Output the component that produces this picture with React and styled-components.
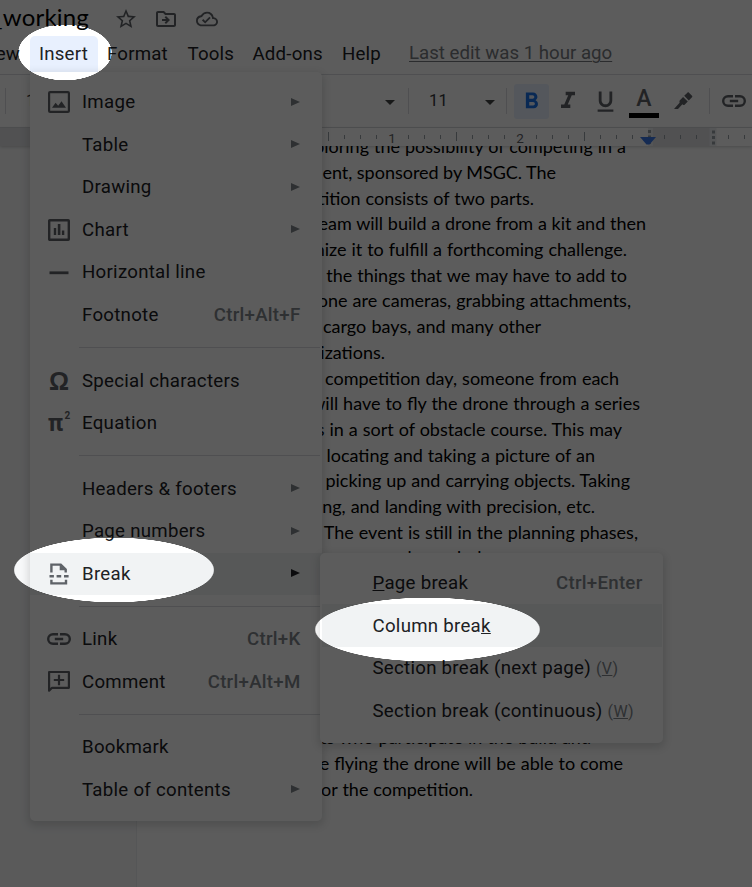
import React from 'react';
import styled, { createGlobalStyle } from 'styled-components';
import {
  MdStarBorder,
  MdOutlineDriveFileMove,
  MdOutlineCloudDone,
  MdFormatBold,
  MdFormatItalic,
  MdFormatUnderlined,
} from 'react-icons/md';

const GlobalStyle = createGlobalStyle`
  * { box-sizing: border-box; }
  body { margin: 0; overflow: hidden; background: #fff; }
`;

const Screen = styled.div`
  position: relative;
  width: 752px;
  height: 887px;
  overflow: hidden;
  display: flex;
  flex-direction: column;
  background: #fff;
  color: #202124;
  font-family: Roboto, sans-serif;
  font-size: 18.67px;
`;

const TitleRow = styled.div`
  height: 36px;
  flex: none;
  display: flex;
  align-items: center;
  color: #5f6368;
`;

const DocTitle = styled.div`
  width: 89px;
  height: 36px;
  display: flex;
  justify-content: flex-end;
  color: #000;
  font: 24px/34px Lato, sans-serif;
  letter-spacing: 0.2px;
  white-space: nowrap;
`;

const TitleIcon = styled.div`
  display: flex;
  margin-left: ${(p) => p.$gap}px;
  margin-top: 1px;
`;

const MenuBar = styled.nav`
  height: 38px;
  flex: none;
  display: flex;
  align-items: flex-start;
`;

const MenuBarItem = styled.div`
  flex: none;
  display: flex;
  justify-content: ${(p) => (p.$end ? 'flex-end' : 'flex-start')};
  width: ${(p) => p.$width}px;
  height: 36px;
  padding-left: 9px;
  line-height: 37px;
  letter-spacing: 0.2px;
  white-space: nowrap;
  border-radius: 5px 5px 0 0;
  background: ${(p) => (p.$active ? '#e8f0fe' : 'transparent')};
`;

const LastEdit = styled.div`
  margin-left: 18px;
  line-height: 35px;
  color: #777b80;
  text-decoration: underline;
  text-underline-offset: 2px;
  text-decoration-thickness: 1px;
  white-space: nowrap;
`;

const Toolbar = styled.div`
  height: 54px;
  flex: none;
  display: flex;
  align-items: center;
  border-top: 1px solid #dadce0;
  border-bottom: 1px solid #dadce0;
  color: #444746;
`;

const Divider = styled.div`
  flex: none;
  width: 1px;
  height: 26px;
  margin-left: ${(p) => p.$gap}px;
  background: #dadce0;
`;

const ToolText = styled.div`
  flex: none;
  width: ${(p) => p.$width}px;
  margin-left: ${(p) => p.$gap}px;
  font-size: 16.5px;
  line-height: 24px;
  letter-spacing: 0.2px;
  color: #333639;
  overflow: hidden;
  white-space: nowrap;
`;

const Caret = styled.div`
  flex: none;
  margin-top: 2px;
  margin-left: ${(p) => p.$gap}px;
  border: 5.5px solid transparent;
  border-top-color: #444746;
  border-bottom: 0;
`;

const ToolButton = styled.div`
  width: 35px;
  height: 35px;
  margin-left: ${(p) => p.$gap}px;
  flex: none;
  display: flex;
  align-items: center;
  justify-content: center;
  border-radius: 3px;
  color: ${(p) => (p.$active ? '#1a73e8' : '#5f6368')};
  background: ${(p) => (p.$active ? '#e8f0fe' : 'transparent')};
`;

const TextColor = styled.div`
  flex: none;
  width: 30px;
  height: 33px;
  margin-left: ${(p) => p.$gap}px;
  border-bottom: 5px solid #000;
  color: #5f6368;
  font: 500 23px/28px Roboto, sans-serif;
  text-align: center;
`;

const Ruler = styled.div`
  height: 18px;
  flex: none;
  display: flex;
  z-index: 1;
  background: #fff;
  box-shadow: 0 1px 3px rgba(60, 64, 67, 0.25);
  color: #5f6368;
`;

const RulerMargin = styled.div`
  width: ${(p) => p.$width}px;
  background: #dfe0e4;
`;

const RulerSvg = styled.svg`
  display: block;
  flex: none;
`;

const Workspace = styled.main`
  flex: 1;
  display: flex;
  background: #f8f9fa;
  overflow: hidden;
`;

const Gutter = styled.div`
  width: 137px;
  flex: none;
  border-right: 1px solid #eceef0;
`;

const Paper = styled.article`
  flex: 1;
  background: #fff;
  color: #000;
  font: 18px/25.7px Lato, sans-serif;
  margin-top: -11.7px;
`;

const Line = styled.p`
  margin: 0;
  height: 25.7px;
  width: ${(p) => p.$end - 137}px;
  display: flex;
  justify-content: flex-end;
  word-spacing: ${(p) => p.$spacing ?? 0.35}px;
  white-space: pre;
`;

const IndentMarker = styled.svg`
  position: absolute;
  left: 640px;
  top: 137px;
  z-index: 2;
`;

const Popup = styled.div`
  position: absolute;
  left: ${(p) => p.$left}px;
  top: ${(p) => p.$top}px;
  width: ${(p) => p.$width}px;
  height: ${(p) => p.$height}px;
  padding-top: 8.8px;
  z-index: 2;
  background: #fff;
  border-radius: ${(p) => p.$radius};
  box-shadow: 0 3px 8px 2px rgba(60, 64, 67, 0.18);
`;

const MenuRow = styled.div`
  height: 42.6px;
  display: flex;
  align-items: center;
  padding-right: 22px;
  background: ${(p) => (p.$active ? '#f1f3f4' : 'transparent')};
`;

const SubRow = styled(MenuRow)`
  height: 42.67px;
  margin: 0 1px 0 2px;
  padding: 0 20px 0 50.5px;
`;

const IconSlot = styled.div`
  width: 52px;
  height: 30px;
  padding-left: 6px;
  flex: none;
  display: flex;
  align-items: center;
  justify-content: center;
  color: #5f6368;
`;

const OmegaGlyph = styled.span`
  font: bold 25px/28px 'Liberation Sans', sans-serif;
`;

const PiGlyph = styled.span`
  display: flex;
  align-items: flex-start;
  font: bold 24px/33px Roboto, sans-serif;
`;

const Exponent = styled.span`
  font-size: 10px;
  line-height: 17px;
  margin-left: 1px;
`;

const Label = styled.div`
  flex: 1;
  letter-spacing: 0.27px;
  line-height: 24px;
  white-space: pre;
`;

const Access = styled.span`
  font-size: 16px;
  color: #80868b;
`;

const Shortcut = styled.div`
  color: #80868b;
  font-weight: 500;
  letter-spacing: 0.27px;
  margin-right: -0.5px;
`;

const Arrow = styled.div`
  margin-right: 0.5px;
  margin-top: -1px;
  border: 4.6px solid transparent;
  border-left: 9.6px solid ${(p) => (p.$active ? '#202124' : '#80868b')};
  border-right: 0;
`;

const Separator = styled.div`
  height: 22.9px;
  padding: 10.9px 2px 0 49px;
  &::before {
    content: '';
    display: block;
    height: 1px;
    background: #dadce0;
  }
`;

const spot = (rx, ry, x, y) =>
  `radial-gradient(${rx}px ${ry}px at ${x}px ${y}px, transparent 98.8%, #000 100%)`;

const Dimmer = styled.div`
  position: absolute;
  inset: 0;
  z-index: 5;
  background: rgba(0, 0, 0, 0.64);
  mask-image: ${spot(47, 28, 65, 52.5)}, ${spot(100.5, 32.5, 114, 570)}, ${spot(113, 32, 427.5, 629.5)};
  mask-composite: intersect;
`;

const ImageIcon = () => (
  <svg width="24" height="24" viewBox="0 0 24 24">
    <rect x="2.1" y="2.1" width="19.8" height="19.8" rx="1" fill="none" stroke="currentColor" strokeWidth="2.2" />
    <path d="M5 17.8l3.6-5 2.6 3 3.3-4.5 4.5 6.5z" fill="currentColor" />
  </svg>
);

const ChartIcon = () => (
  <svg width="24" height="24" viewBox="0 0 24 24">
    <rect x="2.2" y="2.2" width="19.6" height="19.6" rx="0.5" fill="none" stroke="currentColor" strokeWidth="2.4" />
    <path d="M6.8 10h2.4v7H6.8zM10.8 6h2.6v11h-2.6zM14.9 12.5h2.4V17h-2.4z" fill="currentColor" />
  </svg>
);

const RuleIcon = () => (
  <svg width="24" height="24" viewBox="0 0 24 24">
    <path d="M2.5 11.4h19v2.8h-19z" fill="currentColor" />
  </svg>
);

const BreakIcon = () => (
  <svg width="24" height="24" viewBox="0 0 24 24">
    <path
      d="M4.4 10.5V2.6h9.3l5 5v2.9M4.4 17.8v3.6h14.6v-3.6"
      fill="none"
      stroke="currentColor"
      strokeWidth="2.4"
    />
    <path d="M12.7 2v6.3h6.3zM2.5 13h4.4v2.4H2.5zM9.6 13h4.6v2.4H9.6zM17 13h4.6v2.4H17z" fill="currentColor" />
  </svg>
);

const LinkIcon = () => (
  <svg width="24" height="12" viewBox="0 0 24 12">
    <path
      d="M11 1.2H6a4.8 4.8 0 0 0 0 9.6h5M13 1.2h5a4.8 4.8 0 0 1 0 9.6h-5M7.8 6h8.4"
      fill="none"
      stroke="currentColor"
      strokeWidth="2.4"
    />
  </svg>
);

const CommentIcon = () => (
  <svg width="24" height="24" viewBox="0 0 24 24">
    <path d="M2.1 20.7V2h19.8v15.8H5z" fill="none" stroke="currentColor" strokeWidth="2.2" strokeLinejoin="round" />
    <path d="M12 4.8v10.4M6.8 10h10.4" stroke="currentColor" strokeWidth="2.2" />
  </svg>
);

const HighlighterIcon = () => (
  <svg width="20" height="18" viewBox="0 0 20 18">
    <path
      d="M10.2 3.8L13.4.7c.5-.5 1.1-.5 1.6 0l3 3c.5.5.5 1.1 0 1.6l-3.2 3.1zM9.1 4.9l4.7 4.6-3.2 3.2c-.5.5-1.1.5-1.6 0l-.6-.5L4 16.9H0l5.6-6.2-.1-.6c-.2-.7-.1-1.4.4-1.9z"
      fill="currentColor"
    />
  </svg>
);

const icons = {
  image: <ImageIcon />,
  chart: <ChartIcon />,
  rule: <RuleIcon />,
  omega: <OmegaGlyph>Ω</OmegaGlyph>,
  pi: <PiGlyph>π<Exponent>2</Exponent></PiGlyph>,
  break: <BreakIcon />,
  link: <LinkIcon />,
  comment: <CommentIcon />,
};

const insertMenu = [
  { label: 'Image', icon: 'image', sub: true },
  { label: 'Table', sub: true },
  { label: 'Drawing', sub: true },
  { label: 'Chart', icon: 'chart', sub: true },
  { label: 'Horizontal line', icon: 'rule' },
  { label: 'Footnote', keys: 'Ctrl+Alt+F' },
  null,
  { label: 'Special characters', icon: 'omega' },
  { label: 'Equation', icon: 'pi' },
  null,
  { label: 'Headers & footers', sub: true },
  { label: 'Page numbers', sub: true },
  { label: 'Break', icon: 'break', sub: true, active: true },
  null,
  { label: 'Link', icon: 'link', keys: 'Ctrl+K' },
  { label: 'Comment', icon: 'comment', keys: 'Ctrl+Alt+M' },
  null,
  { label: 'Bookmark' },
  { label: 'Table of contents', sub: true },
];

const lines = [
  ['exploring the possibility of competing in a', 626],
  ['tournament, sponsored by MSGC. The', 556, -0.2],
  ['competition consists of two parts.', 534],
  ['Each team will build a drone from a kit and then', 646, 0.1],
  ['customize it to fulfill a forthcoming challenge.', 627],
  ['the things that we may have to add to', 627],
  ['the drone are cameras, grabbing attachments,', 631],
  ['cargo bays, and many other', 541, 0.6],
  ['customizations.', 385],
  ['competition day, someone from each', 619, 0.5],
  ['will have to fly the drone through a series', 640],
  ['laps in a sort of obstacle course. This may', 622],
  ['locating and taking a picture of an', 595],
  ['picking up and carrying objects. Taking', 630],
  ['landing, and landing with precision, etc.', 595],
  ['The event is still in the planning phases,', 638],
  ['our more hours hole', 491],
  ['', 600], ['', 600], ['', 600], ['', 600], ['', 600], ['', 600],
  ['students who participate in the build and', 591],
  ['the flying the drone will be able to come', 623],
  ['for the competition.', 473],
];

const smallTicks = [344.5, 360.5, 376.5, 408.5, 424.5, 440.5, 472.5, 488.5, 504.5, 536.5, 552.5, 568.5, 600.5, 616.5, 632.5];
const tallTicks = [328.5, 456.5, 584.5];

export default function App() {
  return (
    <>
      <GlobalStyle />
      <Screen>
        <TitleRow>
          <DocTitle>_working</DocTitle>
          <TitleIcon $gap={25}><MdStarBorder size={24} /></TitleIcon>
          <TitleIcon $gap={16}><MdOutlineDriveFileMove size={24} /></TitleIcon>
          <TitleIcon $gap={18}><MdOutlineCloudDone size={22} /></TitleIcon>
        </TitleRow>
        <MenuBar>
          <MenuBarItem $width={20} $end>View</MenuBarItem>
          <MenuBarItem $width={10} />
          <MenuBarItem $width={68} $active>Insert</MenuBarItem>
          <MenuBarItem $width={80.5}>Format</MenuBarItem>
          <MenuBarItem $width={65}>Tools</MenuBarItem>
          <MenuBarItem $width={89.5}>Add-ons</MenuBarItem>
          <MenuBarItem $width={58}>Help</MenuBarItem>
          <LastEdit>Last edit was 1 hour ago</LastEdit>
        </MenuBar>
        <Toolbar>
          <Divider $gap={5} />
          <ToolText $gap={20} $width={50}>100%</ToolText>
          <ToolText $gap={224} $width={26}>bri</ToolText>
          <Caret $gap={59} />
          <Divider $gap={12.5} />
          <ToolText $gap={20.5} $width={30}>11</ToolText>
          <Caret $gap={26} />
          <Divider $gap={10.5} />
          <ToolButton $gap={7} $active><MdFormatBold size={27} /></ToolButton>
          <ToolButton $gap={2} ><MdFormatItalic size={28} /></ToolButton>
          <ToolButton $gap={2}><MdFormatUnderlined size={27} /></ToolButton>
          <TextColor $gap={6.5}>A</TextColor>
          <ToolButton $gap={7}><HighlighterIcon /></ToolButton>
          <Divider $gap={8} />
          <ToolButton $gap={6.5}><LinkIcon /></ToolButton>
        </Toolbar>
        <Ruler>
          <RulerMargin $width={264} />
          <RulerSvg width="384" height="18" viewBox="264 0 384 18">
            {smallTicks.map((x) => <path key={x} d={`M${x} 7v4`} stroke="#9aa0a6" />)}
            {tallTicks.map((x) => <path key={x} d={`M${x} 4v9`} stroke="#9aa0a6" />)}
            <text x="392" y="14.5" textAnchor="middle" fontSize="13.5" fill="#5f6368">1</text>
            <text x="520" y="14.5" textAnchor="middle" fontSize="13.5" fill="#5f6368">2</text>
          </RulerSvg>
          <RulerSvg width="104" height="18" viewBox="648 0 104 18">
            <path d="M648 0h65v18h-65z" fill="#dfe0e4" />
            <path d="M645 0h8v18h-8zM709.5 0h7v18h-7z" fill="#eceef0" />
            <path d="M664.5 7v4M680.5 7v4M696.5 7v4M728.5 7v4M744.5 7v4" stroke="#9aa0a6" />
            <path d="M649.5 2v16M713.5 2.5v14" stroke="#9aa0a6" strokeWidth="3" strokeDasharray="3 2.5" />
          </RulerSvg>
        </Ruler>
        <Workspace>
          <Gutter />
          <Paper>
            {lines.map(([text, end, spacing], i) => (
              <Line key={i} $end={end} $spacing={spacing}>{text}</Line>
            ))}
          </Paper>
        </Workspace>

        <IndentMarker width="16" height="9" viewBox="0 0 16 9">
          <path d="M0 0h16l-6.5 7.5h-3z" fill="#3b78e7" />
        </IndentMarker>

        <Popup $left={30} $top={72} $width={292} $height={749} $radius="0 5px 5px 5px">
          {insertMenu.map((item, i) =>
            item ? (
              <MenuRow key={i} $active={item.active}>
                <IconSlot>{item.icon && icons[item.icon]}</IconSlot>
                <Label>{item.label}</Label>
                {item.keys && <Shortcut>{item.keys}</Shortcut>}
                {item.sub && <Arrow $active={item.active} />}
              </MenuRow>
            ) : (
              <Separator key={i} />
            )
          )}
        </Popup>

        <Popup $left={320} $top={553} $width={343} $height={190} $radius="5px">
          <SubRow><Label><u>P</u>age break</Label><Shortcut>Ctrl+Enter</Shortcut></SubRow>
          <SubRow $active><Label>Column brea<u>k</u></Label></SubRow>
          <SubRow><Label>Section break (next page) <Access>(<u>V</u>)</Access></Label></SubRow>
          <SubRow><Label>Section break (continuous) <Access>(<u>W</u>)</Access></Label></SubRow>
        </Popup>

        <Dimmer />
      </Screen>
    </>
  );
}
